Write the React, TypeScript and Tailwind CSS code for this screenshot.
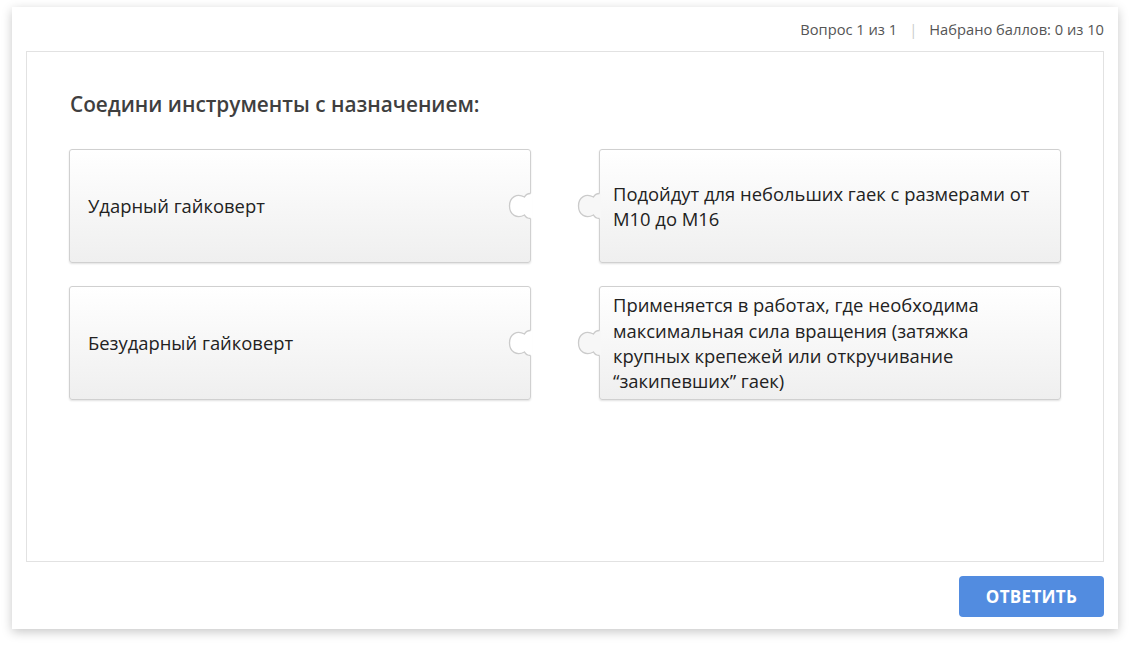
import React from 'react';

const CONNECTOR = 'M 22.5 1.5 C 19 1.5, 17.5 3, 16.5 5 C 9 1, 1.5 5, 1.5 14 C 1.5 23, 9 27, 16.5 23 C 17.5 25, 19 26.5, 22.5 26.5';
const CONNECTOR_FILL = CONNECTOR + ' L 24 26.5 L 24 1.5 Z';

function Notch() {
  // hole cut into the right edge of a left-hand piece
  return (
    <svg width="24" height="28" viewBox="0 0 24 28" className="absolute right-[-1.5px] top-1/2 -translate-y-1/2">
      <path d={CONNECTOR_FILL} fill="#ffffff" />
      <path d={CONNECTOR} fill="none" stroke="#cbcbcb" strokeWidth="1.3" />
    </svg>
  );
}

function Knob() {
  // tab sticking out of the left edge of a right-hand piece
  return (
    <svg width="24" height="28" viewBox="0 0 24 28" className="absolute left-[-23px] top-1/2 -translate-y-1/2">
      <path d={CONNECTOR_FILL} fill="#f7f7f7" />
      <path d={CONNECTOR} fill="none" stroke="#cbcbcb" strokeWidth="1.3" />
    </svg>
  );
}

function Piece({ side, children }: { side: 'left' | 'right'; children: React.ReactNode }) {
  return (
    <div
      className={
        side === 'left'
          ? 'relative h-[114px] flex items-center pl-[18px] pr-8 border border-[#d0d0d0] rounded-[3px] bg-gradient-to-b from-[#ffffff] to-[#efefef] shadow-[0_1px_2px_rgba(0,0,0,0.12)]'
          : 'relative h-[114px] flex items-center pl-[13px] pr-2 border border-[#d0d0d0] rounded-[3px] bg-gradient-to-b from-[#ffffff] to-[#efefef] shadow-[0_1px_2px_rgba(0,0,0,0.12)]'
      }
    >
      {side === 'left' ? <Notch /> : <Knob />}
      <div className="text-[18.4px] leading-[25.4px] text-[#222222] whitespace-nowrap">{children}</div>
    </div>
  );
}

export default function App() {
  return (
    <div className="w-[1130px] h-[647px] bg-white pt-[7px] pl-[12px] font-['Open_Sans',sans-serif]">
      <div className="w-[1106px] h-[622px] bg-white flex flex-col shadow-[0_3px_10px_rgba(0,0,0,0.22)]">
        {/* Top status */}
        <div className="h-[44px] flex items-center justify-end pr-[14px] text-[14.7px] text-[#555555]">
          <span>Вопрос 1 из 1</span>
          <span className="mx-[12px] text-[#cccccc]">|</span>
          <span>Набрано баллов: 0 из 10</span>
        </div>

        {/* Question panel */}
        <div className="mx-[14px] h-[511px] border border-[#e2e2e2] pt-[38px] pl-[42px] pr-[42px]">
          <h1 className="text-[20.8px] leading-[28px] font-semibold text-[#3f3f3f] pl-[1px]">
            Соедини инструменты с назначением:
          </h1>
          <div className="mt-[31px] grid grid-cols-[462px_462px] gap-x-[68px] gap-y-[23px]">
            <Piece side="left">Ударный гайковерт</Piece>
            <Piece side="right">
              Подойдут для небольших гаек с размерами от
              <br />
              М10 до М16
            </Piece>
            <Piece side="left">Безударный гайковерт</Piece>
            <Piece side="right">
              Применяется в работах, где необходима
              <br />
              максимальная сила вращения (затяжка
              <br />
              крупных крепежей или откручивание
              <br />
              “закипевших” гаек)
            </Piece>
          </div>
        </div>

        {/* Footer */}
        <div className="flex justify-end pr-[14px] pt-[14px]">
          <button className="w-[145px] h-[41px] rounded-[4px] bg-[#528ce0] text-white text-[17px] font-bold tracking-[0.3px]">
            ОТВЕТИТЬ
          </button>
        </div>
      </div>
    </div>
  );
}
